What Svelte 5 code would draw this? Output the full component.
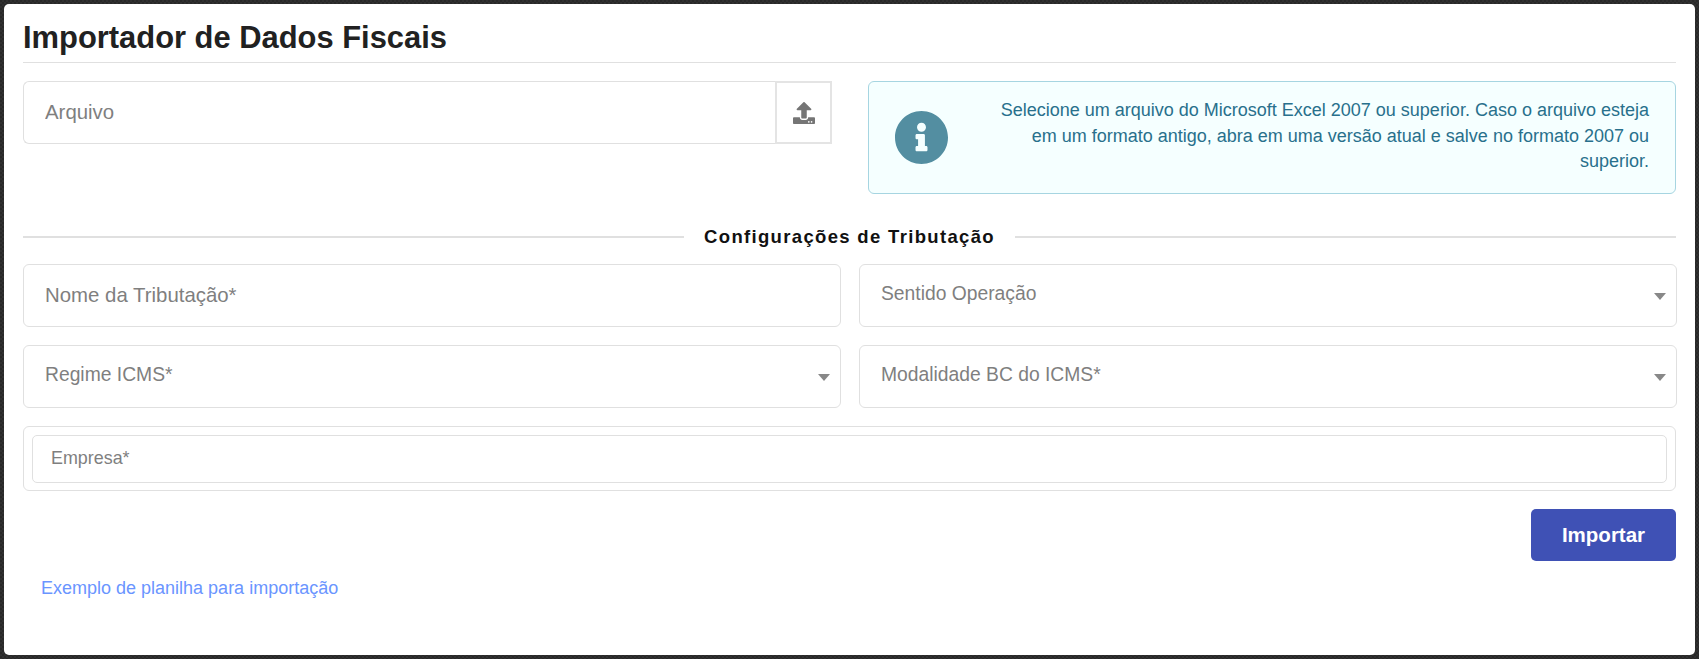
<script>
  let arquivo = $state('');
  let nome = $state('');
  let empresa = $state('');
</script>

<div class="page">
  <main class="panel">
    <h1>Importador de Dados Fiscais</h1>

    <div class="top-row">
      <div class="file-group">
        <input class="field file-input" type="text" placeholder="Arquivo" bind:value={arquivo} />
        <button class="upload-btn" aria-label="Enviar arquivo">
          <svg width="22" height="22" viewBox="0 0 512 512" fill="currentColor">
            <path d="M296 384h-80c-13.3 0-24-10.7-24-24V192h-87.7c-17.8 0-26.7-21.5-14.1-34.1L242.3 5.7c7.5-7.5 19.8-7.5 27.3 0l152.2 152.2c12.6 12.6 3.7 34.1-14.1 34.1H320v168c0 13.3-10.7 24-24 24zm216-8v112c0 13.3-10.7 24-24 24H24c-13.3 0-24-10.7-24-24V376c0-13.3 10.7-24 24-24h136v8c0 30.9 25.1 56 56 56h80c30.9 0 56-25.1 56-56v-8h136c13.3 0 24 10.7 24 24zm-124 88c0-11-9-20-20-20s-20 9-20 20 9 20 20 20 20-9 20-20zm64 0c0-11-9-20-20-20s-20 9-20 20 9 20 20 20 20-9 20-20z"/>
          </svg>
        </button>
      </div>

      <div class="alert">
        <svg class="alert-icon" width="53" height="53" viewBox="8 8 496 496" fill="currentColor">
          <path d="M256 8C119 8 8 119.1 8 256c0 137 111 248 248 248s248-111 248-248C504 119.1 393 8 256 8zm0 110c23.2 0 42 18.8 42 42s-18.8 42-42 42-42-18.8-42-42 18.8-42 42-42zm56 254c0 6.6-5.4 12-12 12h-88c-6.6 0-12-5.4-12-12v-24c0-6.6 5.4-12 12-12h12v-64h-12c-6.6 0-12-5.4-12-12v-24c0-6.6 5.4-12 12-12h64c6.6 0 12 5.4 12 12v100h12c6.6 0 12 5.4 12 12v24z"/>
        </svg>
        <p>Selecione um arquivo do Microsoft Excel 2007 ou superior. Caso o arquivo esteja em um formato antigo, abra em uma versão atual e salve no formato 2007 ou superior.</p>
      </div>
    </div>

    <div class="divider"><span>Configurações de Tributação</span></div>

    <div class="form-grid">
      <input class="field" type="text" placeholder="Nome da Tributação*" bind:value={nome} />
      <div class="select">Sentido Operação<span class="caret"></span></div>
      <div class="select">Regime ICMS*<span class="caret"></span></div>
      <div class="select">Modalidade BC do ICMS*<span class="caret"></span></div>
    </div>

    <div class="company-box">
      <input class="company-input" type="text" placeholder="Empresa*" bind:value={empresa} />
    </div>

    <div class="actions">
      <button class="import-btn">Importar</button>
    </div>

    <a class="sample-link" href="#exemplo">Exemplo de planilha para importação</a>
  </main>
</div>

<style>
  :global(body) {
    margin: 0;
    background: repeating-conic-gradient(#303030 0 25%, #282828 0 50%) 0 0 / 4px 4px;
    font-family: "Liberation Sans", Arial, sans-serif;
  }

  .page {
    padding: 4px;
    height: 651px;
  }

  .panel {
    background: #fff;
    border-radius: 5px;
    height: 651px;
    padding: 0 19px;
    box-sizing: border-box;
  }

  h1 {
    margin: 0;
    padding: 17px 0 8px;
    height: 59px;
    box-sizing: border-box;
    font-size: 30.9px;
    line-height: 33px;
    font-weight: 700;
    color: #212121;
    border-bottom: 1px solid #e0e0e0;
  }

  .top-row {
    display: grid;
    grid-template-columns: 809px 808px;
    column-gap: 36px;
    align-items: start;
    margin-top: 18px;
  }

  .file-group {
    display: flex;
  }

  .field {
    display: block;
    width: 100%;
    height: 63px;
    padding: 0 21px;
    box-sizing: border-box;
    border: 1px solid #e0e0e0;
    border-radius: 6px;
    outline: none;
    font-family: inherit;
    font-size: 20.4px;
    color: #495057;
  }

  .field::placeholder,
  .company-input::placeholder {
    color: #7f7f7f;
    opacity: 1;
  }

  .file-input {
    border-radius: 6px 0 0 6px;
    border-right: none;
  }

  .upload-btn {
    flex: 0 0 57px;
    height: 63px;
    padding: 0;
    background: #fff;
    border: 2px solid #e4e4e4;
    color: #757575;
    display: flex;
    align-items: center;
    justify-content: center;
  }

  .alert {
    display: flex;
    align-items: center;
    height: 113px;
    padding: 0 26px;
    box-sizing: border-box;
    background: #f5ffff;
    border: 1px solid #a6d5e1;
    border-radius: 6px;
  }

  .alert-icon {
    flex: none;
    color: #538ea1;
  }

  .alert p {
    margin: 0 0 2px 50px;
    flex: 1;
    text-align: right;
    font-size: 18px;
    line-height: 25.5px;
    color: #28708c;
  }

  .divider {
    display: flex;
    align-items: center;
    gap: 20px;
    margin-top: 31px;
    height: 23px;
    font-size: 18.5px;
    font-weight: 700;
    letter-spacing: 1.33px;
    color: #111;
  }

  .divider::before,
  .divider::after {
    content: "";
    flex: 1;
    border-top: 2px solid #e0e0e0;
  }

  .form-grid {
    display: grid;
    grid-template-columns: 818px 818px;
    justify-content: space-between;
    gap: 18px;
    margin-top: 16px;
  }

  .select {
    position: relative;
    height: 63px;
    padding: 0 21px 4px;
    box-sizing: border-box;
    display: flex;
    align-items: center;
    border: 1px solid #e0e0e0;
    border-radius: 6px;
    font-size: 19.3px;
    color: #7f7f7f;
  }

  .caret {
    position: absolute;
    right: 10px;
    top: 28px;
    border-left: 6px solid transparent;
    border-right: 6px solid transparent;
    border-top: 7px solid #888;
  }

  .company-box {
    margin-top: 18px;
    padding: 8px;
    height: 65px;
    box-sizing: border-box;
    border: 1px solid #e0e0e0;
    border-radius: 6px;
  }

  .company-input {
    display: block;
    width: 100%;
    height: 48px;
    padding: 0 18px 2px;
    box-sizing: border-box;
    border: 1px solid #e0e0e0;
    border-radius: 5px;
    outline: none;
    font-family: inherit;
    font-size: 17.9px;
  }

  .actions {
    display: flex;
    justify-content: flex-end;
    margin-top: 18px;
  }

  .import-btn {
    width: 145px;
    height: 52px;
    background: #3f51b5;
    border: none;
    border-radius: 5px;
    color: #fff;
    font-family: inherit;
    font-size: 20.5px;
    font-weight: 700;
  }

  .sample-link {
    display: block;
    margin: 16px 0 0 18px;
    font-size: 18px;
    line-height: 22px;
    color: #6a95ff;
    text-decoration: none;
  }
</style>
